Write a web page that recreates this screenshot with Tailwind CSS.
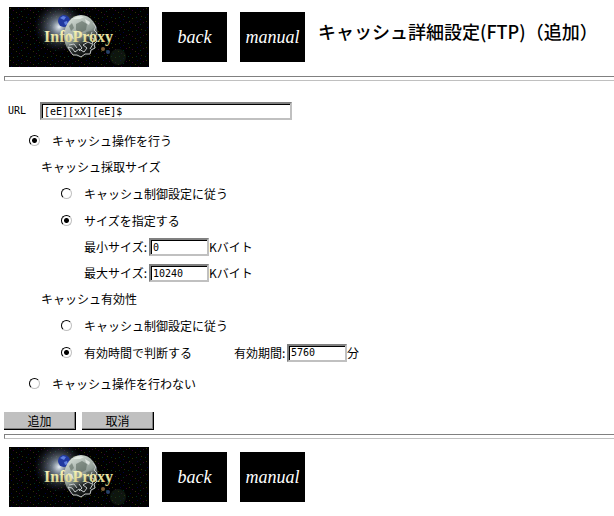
<!DOCTYPE html>
<html lang="ja">
<head>
    <meta charset="UTF-8">
    <meta name="viewport" content="width=device-width, initial-scale=1.0">
    <script src="https://cdn.jsdelivr.net/npm/@tailwindcss/browser@4"></script>
    <title>キャッシュ詳細設定(FTP)</title>
</head>
<body class="bg-white text-black text-xs font-['Noto_Sans_CJK_JP',sans-serif]">

    <!-- ロゴの定義 -->
    <svg class="absolute size-0" aria-hidden="true">
        <defs>
            <radialGradient id="glow">
                <stop offset="0" stop-color="#e8f0f8"/>
                <stop offset="0.3" stop-color="#8290a0" stop-opacity="0.8"/>
                <stop offset="1" stop-color="#303848" stop-opacity="0"/>
            </radialGradient>
            <linearGradient id="moon" x1="0.2" y1="0" x2="0.7" y2="1">
                <stop offset="0" stop-color="#dce4dc"/>
                <stop offset="0.5" stop-color="#909c96"/>
                <stop offset="0.7" stop-color="#252a2a"/>
                <stop offset="1" stop-color="#080808"/>
            </linearGradient>
            <linearGradient id="gold" x1="0" y1="0" x2="0" y2="1">
                <stop offset="0" stop-color="#fffbc0"/>
                <stop offset="1" stop-color="#d0c880"/>
            </linearGradient>
            <pattern id="stars" width="17" height="13" patternUnits="userSpaceOnUse">
                <path fill="#333300" d="M1 1h1v1h-1zM7 5h1v1h-1zM13 9h1v1h-1zM4 11h1v1h-1z"/>
                <path fill="#330033" d="M4 3h1v1h-1zM10 7h1v1h-1zM15 2h1v1h-1z"/>
                <path fill="#000044" d="M9 1h1v1h-1zM2 7h1v1h-1zM12 12h1v1h-1z"/>
                <path fill="#003322" d="M12 4h1v1h-1zM0 10h1v1h-1zM8 10h1v1h-1z"/>
            </pattern>
        </defs>
        <symbol id="space" viewBox="0 0 140 60">
            <rect width="140" height="60" fill="#000"/>
            <rect width="140" height="60" fill="url(#stars)"/>
            <circle cx="50" cy="20" r="25" fill="url(#glow)"/>
            <circle cx="55" cy="14" r="6" fill="#2038a0"/>
            <path d="M51 11l3-2 3 1-2 3zM55 15l3-1 1 3-3 1z" fill="#6080e0"/>
            <ellipse cx="72" cy="29" rx="17" ry="21" fill="url(#moon)"/>
            <path d="M67 17l6-3 5 3-1 6-6 3-4-3zM77 25l5-1 2 4-4 3zM60 19l3-3 2 5-3 3z" fill="#4c5a50" fill-opacity="0.5"/>
            <path d="M64 12l5-3 6 1-4 2zM76 12l5 3-1 3-3-2zM59 26l4 1 2 5-4-1z" fill="#f0f4f0" fill-opacity="0.7"/>
            <path d="M84 16l3 4-2 3 3 3-2 4 2 4-3 3 1 4-4 2-1 4-5 0-4 3-4-2-4 0-3-4-2-4 4 1 3 4 4-3 5 3 3-4-4-3 5-3 4 2 2-5-4-2 2-5M60 38l5-1 3 4M70 37l3 4-3 3M84 37l-3 5" fill="none" stroke="#c4c8c8" stroke-width="1"/>
            <circle cx="94" cy="42" r="2" fill="#806038"/>
            <circle cx="99" cy="45" r="2" fill="#284068"/>
            <circle cx="109" cy="50" r="8" fill="#203020" fill-opacity="0.45"/>
        </symbol>
    </svg>

    <header class="flex gap-[13px] pl-[9px] pt-[7px]">
        <svg class="w-[140px] h-[60px] shrink-0" viewBox="0 0 140 60">
            <use href="#space"/>
            <text x="35" y="35" font-family="Liberation Serif" font-weight="700" font-size="16" fill="url(#gold)">InfoProxy</text>
        </svg>
        <nav class="flex items-center gap-[13px] font-['Liberation_Serif',serif] italic text-lg text-white">
            <a href="#" class="flex items-center justify-center w-[65px] h-[50px] bg-black">back</a>
            <a href="#" class="flex items-center justify-center w-[65px] h-[50px] bg-black">manual</a>
        </nav>
        <h1 class="pt-2.5 text-lg leading-7 font-medium whitespace-nowrap">キャッシュ詳細設定(FTP)（追加）</h1>
    </header>

    <hr class="ml-1 mt-[9px] h-[5px] border border-r-0 border-t-[#808080] border-l-[#808080] border-b-[#c0c0c0]">

    <form class="pl-1">
        <div class="flex items-center pl-1 pt-[21px]">
            <label for="url" class="w-8 font-['DejaVu_Sans_Mono',monospace] text-[10px]">URL</label>
            <input id="url" type="text" value="[eE][xX][eE]$" class="w-[252px] h-[18px] px-0.5 bg-white border-2 border-[#c0c0c0] border-t-[#808080] border-l-[#808080] shadow-[inset_1px_1px_0_#000] font-['DejaVu_Sans_Mono',monospace] text-[10px]">
        </div>

        <div class="flex items-center gap-3 h-[27px] mt-[7px] pl-[25px]">
            <input id="on" type="radio" name="cache" checked class="appearance-none size-[11px] rounded-full border border-[#c0c0c0] border-t-black border-l-black checked:bg-[radial-gradient(circle,black_2px,white_3px)]">
            <label for="on">キャッシュ操作を行う</label>
        </div>

        <div class="pl-[37px]">
            <p class="flex items-center h-[26px]">キャッシュ採取サイズ</p>
            <div class="pl-5">
                <div class="flex items-center gap-3 h-[27px]">
                    <input id="size-default" type="radio" name="size" class="appearance-none size-[11px] rounded-full border border-[#c0c0c0] border-t-black border-l-black checked:bg-[radial-gradient(circle,black_2px,white_3px)]">
                    <label for="size-default">キャッシュ制御設定に従う</label>
                </div>
                <div class="flex items-center gap-3 h-[27px]">
                    <input id="size-set" type="radio" name="size" checked class="appearance-none size-[11px] rounded-full border border-[#c0c0c0] border-t-black border-l-black checked:bg-[radial-gradient(circle,black_2px,white_3px)]">
                    <label for="size-set">サイズを指定する</label>
                </div>
                <div class="flex items-center h-[26px] pl-[23px]">
                    <label for="min" class="w-[65px]">最小サイズ:</label>
                    <input id="min" type="text" value="0" class="w-[60px] h-[18px] px-0.5 bg-white border-2 border-[#c0c0c0] border-t-[#808080] border-l-[#808080] shadow-[inset_1px_1px_0_#000] font-['DejaVu_Sans_Mono',monospace] text-[10px]">
                    <span>Kバイト</span>
                </div>
                <div class="flex items-center h-[26px] pl-[23px]">
                    <label for="max" class="w-[65px]">最大サイズ:</label>
                    <input id="max" type="text" value="10240" class="w-[60px] h-[18px] px-0.5 bg-white border-2 border-[#c0c0c0] border-t-[#808080] border-l-[#808080] shadow-[inset_1px_1px_0_#000] font-['DejaVu_Sans_Mono',monospace] text-[10px]">
                    <span>Kバイト</span>
                </div>
            </div>

            <p class="flex items-center h-[26px]">キャッシュ有効性</p>
            <div class="pl-5">
                <div class="flex items-center gap-3 h-[27px]">
                    <input id="valid-default" type="radio" name="valid" class="appearance-none size-[11px] rounded-full border border-[#c0c0c0] border-t-black border-l-black checked:bg-[radial-gradient(circle,black_2px,white_3px)]">
                    <label for="valid-default">キャッシュ制御設定に従う</label>
                </div>
                <div class="flex items-center gap-3 h-[27px]">
                    <input id="valid-time" type="radio" name="valid" checked class="appearance-none size-[11px] rounded-full border border-[#c0c0c0] border-t-black border-l-black checked:bg-[radial-gradient(circle,black_2px,white_3px)]">
                    <label for="valid-time">有効時間で判断する</label>
                    <div class="flex items-center pl-[30px]">
                        <label for="period" class="w-[53px]">有効期間:</label>
                        <input id="period" type="text" value="5760" class="w-[60px] h-[18px] px-0.5 bg-white border-2 border-[#c0c0c0] border-t-[#808080] border-l-[#808080] shadow-[inset_1px_1px_0_#000] font-['DejaVu_Sans_Mono',monospace] text-[10px]">
                        <span>分</span>
                    </div>
                </div>
            </div>
        </div>

        <div class="flex items-center gap-3 h-[27px] mt-1 pl-[25px]">
            <input id="off" type="radio" name="cache" class="appearance-none size-[11px] rounded-full border border-[#c0c0c0] border-t-black border-l-black checked:bg-[radial-gradient(circle,black_2px,white_3px)]">
            <label for="off">キャッシュ操作を行わない</label>
        </div>

        <div class="flex gap-1.5 mt-[15px]">
            <button type="submit" class="flex items-center justify-center w-[72px] h-[18px] bg-[#c0c0c0] border-r border-b border-black shadow-[inset_-1px_-1px_0_#808080]">追加</button>
            <button type="reset" class="flex items-center justify-center w-[72px] h-[18px] bg-[#c0c0c0] border-r border-b border-black shadow-[inset_-1px_-1px_0_#808080]">取消</button>
        </div>
    </form>

    <hr class="ml-1 mt-1 h-[5px] border border-r-0 border-t-[#808080] border-l-[#808080] border-b-[#c0c0c0]">

    <footer class="flex gap-[13px] pl-[9px] pt-2">
        <svg class="w-[140px] h-[60px] shrink-0" viewBox="0 0 140 60">
            <use href="#space"/>
            <text x="35" y="35" font-family="Liberation Serif" font-weight="700" font-size="16" fill="url(#gold)">InfoProxy</text>
        </svg>
        <nav class="flex items-center gap-[13px] font-['Liberation_Serif',serif] italic text-lg text-white">
            <a href="#" class="flex items-center justify-center w-[65px] h-[50px] bg-black">back</a>
            <a href="#" class="flex items-center justify-center w-[65px] h-[50px] bg-black">manual</a>
        </nav>
    </footer>
</body>
</html>
